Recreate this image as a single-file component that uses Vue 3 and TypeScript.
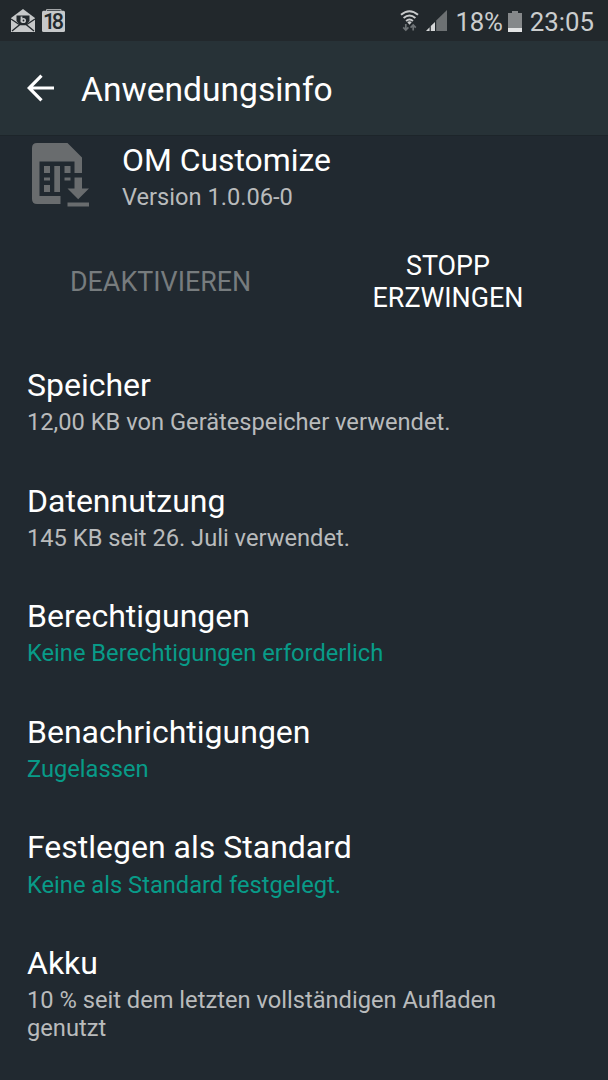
<script setup lang="ts">
interface Entry {
  title: string
  summary: string
  accent?: boolean
}

const entries: Entry[] = [
  { title: 'Speicher', summary: '12,00 KB von Gerätespeicher verwendet.' },
  { title: 'Datennutzung', summary: '145 KB seit 26. Juli verwendet.' },
  { title: 'Berechtigungen', summary: 'Keine Berechtigungen erforderlich', accent: true },
  { title: 'Benachrichtigungen', summary: 'Zugelassen', accent: true },
  { title: 'Festlegen als Standard', summary: 'Keine als Standard festgelegt.', accent: true },
  { title: 'Akku', summary: '10 % seit dem letzten vollständigen Aufladen genutzt' },
]
</script>

<template>
  <div class="screen">
    <div class="status">
      <svg class="mail" width="24" height="24" viewBox="0 0 24 24">
        <path d="M0 9 12 0 24 9V23H0Z" fill="#c6c8c9" />
        <path d="M5.5 6.5H18.5V12L15 16H9L5.5 12Z" fill="#22282c" />
        <path d="M0 10 9 16M24 10 15 16M1 22 9 15.5H15L23 22" fill="none" stroke="#22282c" stroke-width="1.3" />
        <path d="M10.5 7.5V13.2" stroke="#c6c8c9" stroke-width="1.8" />
        <circle cx="12.4" cy="11.5" r="1.8" fill="none" stroke="#c6c8c9" stroke-width="1.6" />
      </svg>
      <svg class="calendar" width="24" height="24" viewBox="0 0 24 24">
        <path d="M4.5 2V0.5H19V2" fill="none" stroke="#a2a5a7" />
        <rect y="1.8" width="23" height="21.2" rx="1.5" fill="#c6c8c9" />
        <text x="11.6" y="19.5" text-anchor="middle" textLength="21">18</text>
      </svg>
      <div class="spacer"></div>
      <svg class="wifi" width="20" height="23" viewBox="0 0 20 23">
        <g fill="none" stroke="#c9cbcc" stroke-width="2">
          <path d="M1 4.8Q9.5-2.3 18 4.8" />
          <path d="M3.6 8Q9.5 3 15.4 8" />
          <path d="M6.1 11Q9.5 8 12.9 11" />
        </g>
        <path d="M7.3 12.2Q9.5 10.4 11.7 12.2L9.5 14.8Z" fill="#c9cbcc" />
        <path d="M5.8 14V20M3.2 17.4 5.8 20 8.4 17.4M13.2 20.5V15M10.6 17.6 13.2 15 15.8 17.6" fill="none" stroke="#6e7376" stroke-width="1.7" />
      </svg>
      <svg class="signal" width="22" height="21" viewBox="0 0 22 21">
        <path d="M10.2 10.5 21 0V21H10.2Z" fill="#6d7173" />
        <path d="M0 21 3.6 17.3V21ZM4.8 16.1 9 12V21H4.8Z" fill="#d5d7d8" />
      </svg>
      <span class="percent">18%</span>
      <svg class="battery" width="14" height="21" viewBox="0 0 14 21">
        <path d="M4 0H10V2H14V17H0V2H4Z" fill="#85888a" />
        <path d="M0 17H14V21H0Z" fill="#e2e3e4" />
      </svg>
      <span class="clock">23:05</span>
    </div>

    <header class="bar">
      <svg width="28" height="28" viewBox="0 0 28 28">
        <path d="M27 14H2M14.5 1.7 2.2 14 14.5 26.3" fill="none" stroke="#fff" stroke-width="3.2" />
      </svg>
      <h1>Anwendungsinfo</h1>
    </header>

    <section class="app">
      <svg width="58" height="64" viewBox="0 0 58 64">
        <path fill="#696c6e" fill-rule="evenodd" d="M5 0H35.5L50 14.5V30H42.5V18.5H7.5V53H28.5V61H5Q0 61 0 56V5Q0 0 5 0Z" />
        <path fill="#696c6e" d="M12 23H18V30H12ZM12 34.5H18V37.5H12ZM12 42H18V49H12ZM22.3 23H28V49H22.3ZM32.5 23H38.5V30H32.5ZM32.5 34.5H38.5V37.5H32.5Z" />
        <path fill="#696c6e" d="M42.5 34.5H50V45.5H57L46.2 56.3 35.5 45.5H42.5ZM35.5 59.5H57V63.5H35.5Z" />
      </svg>
      <div>
        <div class="name">OM Customize</div>
        <div class="version">Version 1.0.06-0</div>
      </div>
    </section>

    <div class="actions">
      <button class="disabled" disabled>DEAKTIVIEREN</button>
      <button>STOPP ERZWINGEN</button>
    </div>

    <main>
      <div v-for="entry in entries" :key="entry.title" class="entry">
        <div class="title">{{ entry.title }}</div>
        <div class="summary" :class="{ accent: entry.accent }">{{ entry.summary }}</div>
      </div>
    </main>
  </div>
</template>

<style>
body {
  margin: 0;
  background: #212930;
}
</style>

<style scoped>
.screen {
  box-sizing: border-box;
  width: 608px;
  height: 1080px;
  overflow: hidden;
  background: #212930;
  color: #fff;
  font-family: Roboto, "Noto Sans", sans-serif;
}
.status {
  box-sizing: border-box;
  height: 41px;
  padding: 0 14px 0 11px;
  display: flex;
  align-items: flex-start;
  background: #22282c;
  color: #cbcdce;
}
.mail {
  margin-top: 9px;
}
.calendar {
  margin: 9px 0 0 7px;
}
.calendar text {
  fill: #22282c;
  font-size: 21.5px;
  font-weight: 500;
}
.spacer {
  flex: 1;
}
.wifi {
  margin: 10px 6px 0 0;
}
.signal {
  margin: 10px 7px 0 0;
}
.percent,
.clock {
  font-size: 25.8px;
  line-height: 44px;
}
.percent {
  letter-spacing: -0.2px;
}
.battery {
  margin: 11px 8px 0 5px;
}
.bar {
  box-sizing: border-box;
  height: 95px;
  padding: 0 27px;
  display: flex;
  align-items: center;
  gap: 26px;
  background: #273237;
  border-bottom: 1px solid #1d252a;
}
.bar h1 {
  margin: 4px 0 0;
  font-size: 33.6px;
  line-height: 40px;
  font-weight: 400;
}
.app {
  box-sizing: border-box;
  height: 83px;
  padding: 6px 0 0 32px;
  display: flex;
  gap: 32px;
}
.app svg {
  margin-top: 0.5px;
}
.name {
  margin-top: -2px;
  font-size: 31.9px;
  line-height: 40px;
}
.version {
  font-size: 23.65px;
  line-height: 28px;
  margin-top: 3px;
  color: #b9bbbc;
}
.actions {
  display: grid;
  grid-template-columns: 180px 180px;
  column-gap: 108px;
  justify-content: center;
  align-items: center;
  height: 124px;
}
.actions button {
  padding: 1px 0 0;
  border: 0;
  background: none;
  color: #fff;
  font: 400 26.85px/32px Roboto, "Noto Sans", sans-serif;
}
.actions .disabled {
  color: #777c7e;
}
main {
  padding: 22px 27px 0;
}
.entry {
  height: 115.6px;
}
.title {
  font-size: 32px;
  line-height: 40px;
}
.summary {
  width: 500px;
  margin-top: 3.3px;
  font-size: 23.68px;
  line-height: 28px;
  color: #b9bbbc;
}
.summary.accent {
  color: #089b88;
}
</style>
